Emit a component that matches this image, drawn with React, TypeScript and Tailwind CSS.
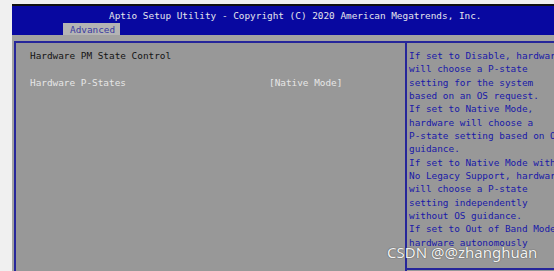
import React from "react";

const helpLines = [
  "If set to Disable, hardware",
  "will choose a P-state",
  "setting for the system",
  "based on an OS request.",
  "If set to Native Mode,",
  "hardware will choose a",
  "P-state setting based on OS",
  "guidance.",
  "If set to Native Mode with",
  "No Legacy Support, hardware",
  "will choose a P-state",
  "setting independently",
  "without OS guidance.",
  "If set to Out of Band Mode,",
  "hardware autonomously",
];

export default function App() {
  return (
    <div
      className="relative w-[554px] h-[271px] overflow-hidden bg-[#f0f0f0] pl-[12px] pt-[4px] text-[9.4px] leading-[13.33px] whitespace-pre"
      style={{ fontFamily: '"DejaVu Sans Mono", "Liberation Mono", monospace' }}
    >
      <div className="flex flex-col h-full">
        <div className="h-[2px] bg-[#101010]" />
        <div className="h-[29px] bg-[#0808a0] flex flex-col">
          <div className="h-[17px] pl-[97px] pt-[3px] text-[#e4e4ec]">
            Aptio Setup Utility - Copyright (C) 2020 American Megatrends, Inc.
          </div>
          <div className="flex pl-[51px]">
            <div className="h-[12px] w-[57px] bg-[#b4b4b4] pl-[7px] text-[#3a3aa0] leading-[13px]">
              Advanced
            </div>
          </div>
        </div>
        <div className="flex-1 bg-[#a2a2a2] pt-[6px] pl-[2px]">
          <div className="h-full bg-[#989898] border-l-2 border-t-2 border-[#26269a] flex">
            <div className="w-[391px] shrink-0 pl-[14px] pt-[6px] border-r-2 border-[#26269a]">
              <div className="text-[#141414]">Hardware PM State Control</div>
              <div className="h-[13.33px]" />
              <div className="flex text-[#e6e6e6]">
                <div className="w-[239px]">Hardware P-States</div>
                <div>[Native Mode]</div>
              </div>
            </div>
            <div className="flex-1 min-w-0 overflow-hidden flex flex-col">
              <div className="pl-[2px] pt-[6px] h-[225px] text-[#1818a8]">
                {helpLines.map((l, i) => (
                  <div key={i}>{l}</div>
                ))}
              </div>
              <div className="h-[2px] bg-[#26269a]" />
            </div>
          </div>
        </div>
      </div>
      <div
        className="absolute left-[387px] top-[243px] text-[15px] leading-[18px] text-[#f2f2f2]"
        style={{
          fontFamily: '"Noto Sans", "Open Sans", sans-serif',
          textShadow: "0 0 1px #555, 0 0 1px #555",
        }}
      >
        CSDN @@zhanghuan
      </div>
    </div>
  );
}
